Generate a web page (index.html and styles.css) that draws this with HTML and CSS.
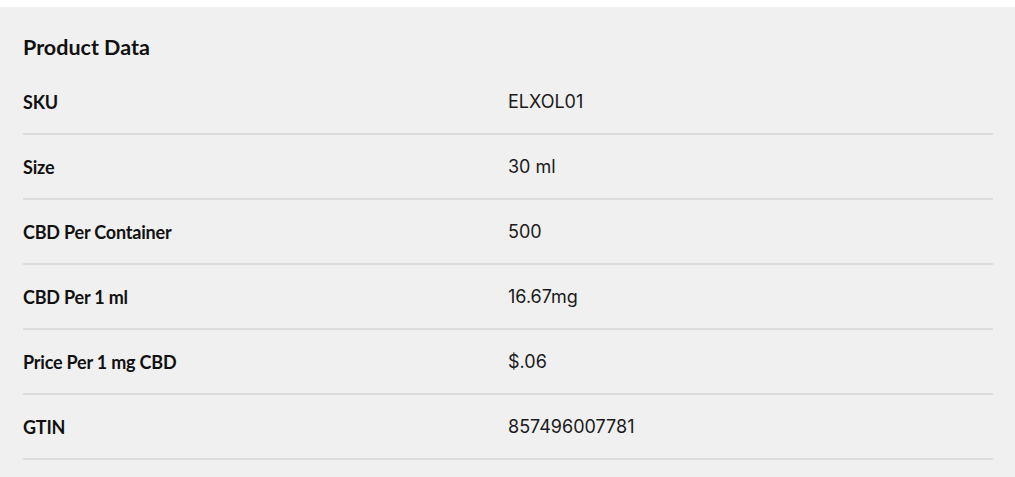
FILE: index.html
```html
<!DOCTYPE html>
<html>
<head>
<meta charset="utf-8">
<link rel="stylesheet" href="styles.css">
</head>
<body>
<section class="panel">
  <h2 class="title">Product Data</h2>
  <div class="table">
    <div class="row"><div class="label">SKU</div><div class="value">ELXOL01</div></div>
    <div class="row"><div class="label">Size</div><div class="value">30 ml</div></div>
    <div class="row"><div class="label">CBD Per Container</div><div class="value">500</div></div>
    <div class="row"><div class="label">CBD Per 1 ml</div><div class="value">16.67mg</div></div>
    <div class="row"><div class="label">Price Per 1 mg CBD</div><div class="value">$.06</div></div>
    <div class="row"><div class="label">GTIN</div><div class="value">857496007781</div></div>
  </div>
</section>
</body>
</html>
```
FILE: styles.css
```css
html, body {
  margin: 0;
  padding: 0;
  background: #ffffff;
}
body {
  padding-top: 7px;
}
.panel {
  background: #f0f0f0;
  padding: 27px 22px 18px 23px;
  min-height: 470px;
  box-sizing: border-box;
}
.title {
  margin: 0;
  font-family: "Lato", "Open Sans", sans-serif;
  font-weight: 700;
  font-size: 21.5px;
  line-height: 26px;
  color: #111;
}
.table {
  margin-top: 10px;
}
.row {
  display: grid;
  grid-template-columns: 1fr 1fr;
  align-items: center;
  height: 63px;
  border-bottom: 2px solid #dcdcdc;
}
.label {
  font-family: "Lato", "Open Sans", sans-serif;
  font-weight: 700;
  font-size: 18px;
  letter-spacing: -0.2px;
  color: #111;
}
.value {
  font-family: "Inter", "Roboto", sans-serif;
  font-weight: 400;
  font-size: 18px;
  color: #1a1a1a;
}
```
